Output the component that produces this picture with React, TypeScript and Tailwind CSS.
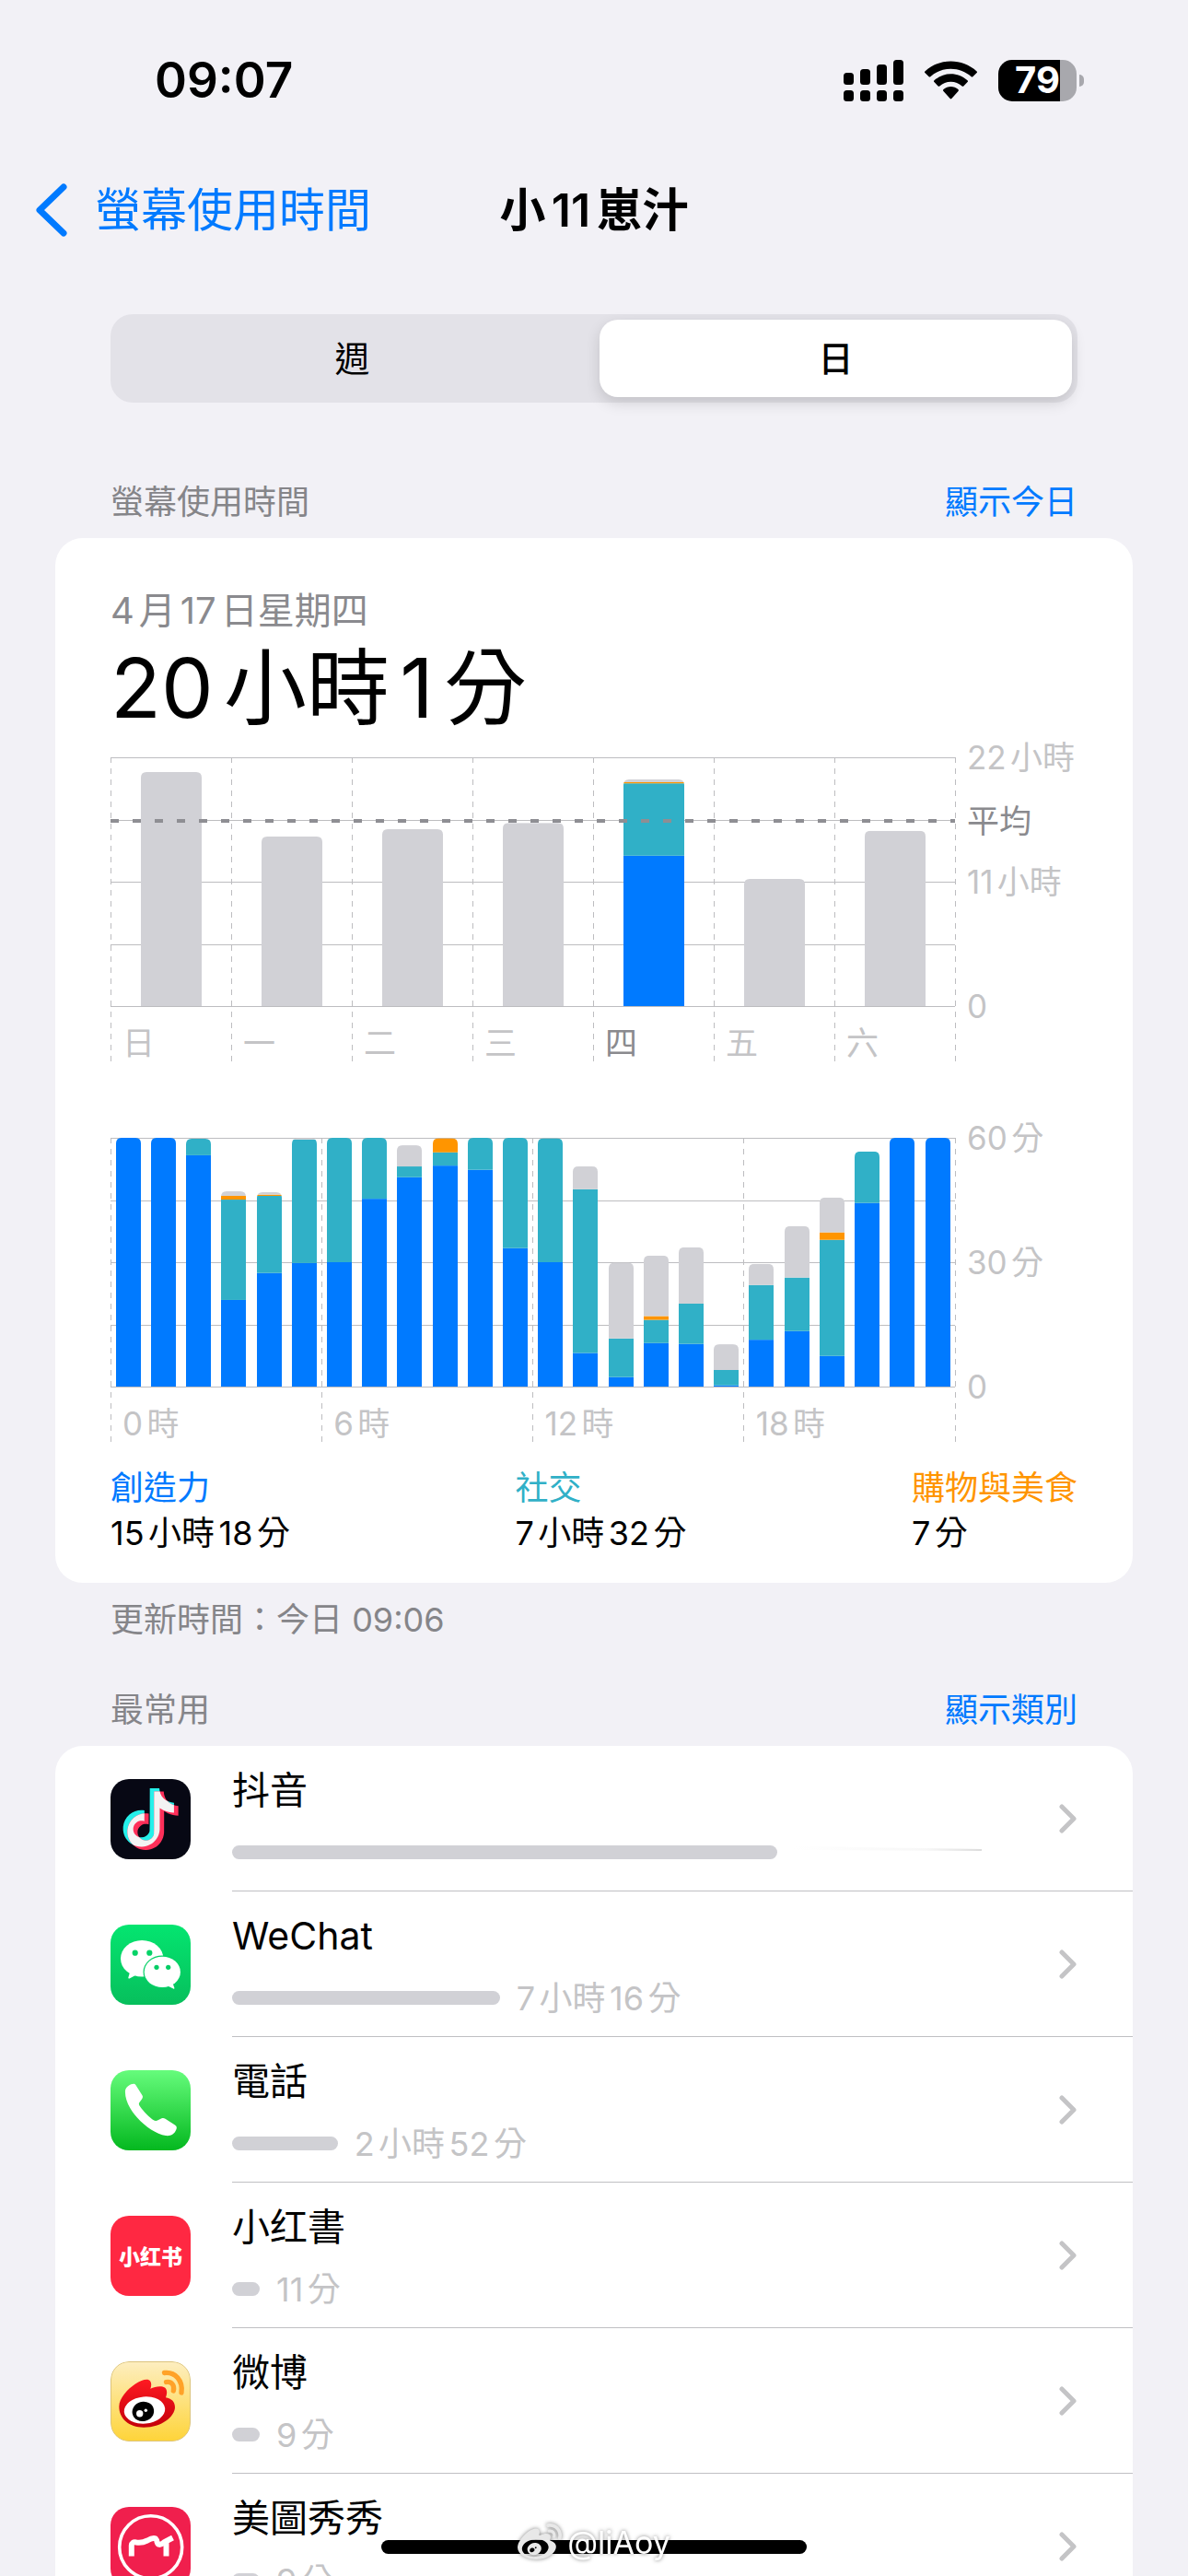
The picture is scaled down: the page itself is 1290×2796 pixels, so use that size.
import { useState } from 'react'
import { FaWeibo } from 'react-icons/fa'

type Segments = { creative?: number; social?: number; shopping?: number; other?: number }

const PLOT_WIDTH = 917
const PLOT_HEIGHT = 270
const PLOT_TOP = 24

const segmentColors: [keyof Segments, string][] = [
  ['creative', '#007aff'],
  ['social', '#30b0c7'],
  ['shopping', '#ff9500'],
  ['other', '#d1d1d6'],
]

// hours per day
const week: Segments[] = [
  { other: 20.7 },
  { other: 15 },
  { other: 15.65 },
  { other: 16.2 },
  { creative: 13.3, social: 6.4, shopping: 0.1, other: 0.25 },
  { other: 11.25 },
  { other: 15.5 },
]

// minutes per hour
const hours: Segments[] = [
  { creative: 60 },
  { creative: 60 },
  { creative: 55.8, social: 4 },
  { creative: 20.9, social: 24.2, shopping: 0.9, other: 1.1 },
  { creative: 27.4, social: 18.6, shopping: 0.3, other: 0.6 },
  { creative: 29.8, social: 29.8, other: 0.3 },
  { creative: 30, social: 30 },
  { creative: 45.3, social: 14.7 },
  { creative: 50.5, social: 2.6, other: 5.1 },
  { creative: 53.3, social: 3.2, shopping: 3.4 },
  { creative: 52.3, social: 7.7 },
  { creative: 33.4, social: 26.6 },
  { creative: 30, social: 29.9 },
  { creative: 8.1, social: 39.5, other: 5.5 },
  { creative: 2.3, social: 9.3, other: 18.3 },
  { creative: 10.5, social: 5.6, shopping: 0.9, other: 14.6 },
  { creative: 10.3, social: 9.7, other: 13.6 },
  { creative: 0.3, social: 3.7, other: 6.2 },
  { creative: 11.3, social: 13.2, other: 5.1 },
  { creative: 13.4, social: 12.9, other: 12.4 },
  { creative: 7.4, social: 28, shopping: 1.8, other: 8.4 },
  { creative: 44.3, social: 12.4 },
  { creative: 60 },
  { creative: 60 },
]

interface ChartProps {
  id: string
  label: string
  data: Segments[]
  max: number
  barRatio: number
  ticks: string[]
  activeTick?: number
  axis: { value: number; text: string }[]
  average?: number
}

function Chart({ id, label, data, max, barRatio, ticks, activeTick, axis, average }: ChartProps) {
  const column = PLOT_WIDTH / data.length
  const barWidth = column * barRatio
  const tickWidth = PLOT_WIDTH / ticks.length
  const bottom = PLOT_TOP + PLOT_HEIGHT
  const toY = (value: number) => bottom - (value / max) * PLOT_HEIGHT

  return (
    <svg viewBox="0 0 1050 354" role="img" aria-label={label} className="block h-auto w-full overflow-visible">
      {[0, 0.25, 0.5, 0.75, 1].map((t) => (
        <rect key={t} x="0" y={Math.round(PLOT_TOP + t * PLOT_HEIGHT)} width={PLOT_WIDTH} height="1" fill="#bdbdc0" />
      ))}
      {Array.from({ length: ticks.length + 1 }, (_, i) => {
        const x = Math.floor(i * tickWidth) + 0.5
        return (
          <line key={i} x1={x} x2={x} y1={PLOT_TOP} y2="354" stroke="#bdbdc0" strokeWidth="1" strokeDasharray="6 6" />
        )
      })}

      {data.map((segments, i) => {
        const x = Math.round(i * column + (column - barWidth) / 2)
        const w = Math.round(barWidth)
        const total = segmentColors.reduce((sum, [key]) => sum + (segments[key] || 0), 0)
        const top = toY(total)
        let stacked = 0
        return (
          <g key={i} clipPath={`url(#${id}-${i})`}>
            <clipPath id={`${id}-${i}`}>
              <path d={`M${x} ${bottom}V${top + 6}q0 -6 6 -6h${w - 12}q6 0 6 6V${bottom}z`} />
            </clipPath>
            {segmentColors.map(([key, color]) => {
              const value = segments[key] || 0
              if (!value) return null
              stacked += value
              return (
                <rect key={key} x={x} y={toY(stacked)} width={w} height={(value / max) * PLOT_HEIGHT} fill={color} />
              )
            })}
          </g>
        )
      })}

      {average !== undefined && (
        <line
          x1="0"
          x2={PLOT_WIDTH}
          y1={Math.round(toY(average))}
          y2={Math.round(toY(average))}
          stroke="#8e8e93"
          strokeWidth="4"
          strokeDasharray="9 15"
        />
      )}

      {ticks.map((text, i) => (
        <text
          key={text}
          x={i * tickWidth + 13}
          y="347"
          className={`text-[35px] ${i === activeTick ? 'fill-[#8a8a8e]' : 'fill-[#c4c4c6]'}`}
        >
          {text}
        </text>
      ))}
      {axis.map(({ value, text }) => (
        <text
          key={text}
          x="930"
          y={toY(value) + 13}
          className={`text-[35px] ${text === '平均' ? 'fill-[#8a8a8e]' : 'fill-[#c4c4c6]'}`}
        >
          {text}
        </text>
      ))}
    </svg>
  )
}

const TIKTOK_NOTE =
  'M12.525.02c1.31-.02 2.61-.01 3.91-.02.08 1.53.63 3.09 1.75 4.17 1.12 1.11 2.7 1.62 4.24 1.79v4.03c-1.44-.05-2.89-.35-4.2-.97-.57-.26-1.1-.59-1.62-.93-.01 2.92.01 5.84-.02 8.75-.08 1.4-.54 2.79-1.35 3.94-1.31 1.92-3.58 3.17-5.91 3.21-1.43.08-2.86-.31-4.08-1.03-2.02-1.19-3.44-3.37-3.65-5.71-.02-.5-.03-1-.01-1.49.18-1.9 1.12-3.72 2.58-4.96 1.66-1.44 3.98-2.13 6.15-1.72.02 1.48-.04 2.96-.04 4.44-.99-.32-2.15-.23-3.02.37-.63.41-1.11 1.04-1.36 1.75-.21.51-.15 1.07-.14 1.61.24 1.64 1.82 3.02 3.5 2.87 1.12-.01 2.19-.66 2.77-1.61.19-.33.4-.67.41-1.06.1-1.79.06-3.57.07-5.36.01-4.03-.01-8.05.02-12.07z'

const iconClass = 'size-[87px] shrink-0 rounded-[20px]'

function DouyinIcon() {
  return (
    <svg viewBox="0 0 87 87" className={iconClass} aria-hidden="true">
      <rect width="87" height="87" fill="#070814" />
      <clipPath id="note">
        <path transform="translate(9.5 10) scale(2.65)" d={TIKTOK_NOTE} />
      </clipPath>
      <path transform="translate(9.5 10) scale(2.65)" d={TIKTOK_NOTE} fill="#25f0ea" />
      <path transform="translate(14.2 13.4) scale(2.65)" d={TIKTOK_NOTE} fill="#fe2f59" />
      <g clipPath="url(#note)">
        <path transform="translate(14.2 13.4) scale(2.65)" d={TIKTOK_NOTE} fill="#f3f3f3" />
      </g>
    </svg>
  )
}

function WeChatIcon() {
  return (
    <svg viewBox="0 0 87 87" className={iconClass} aria-hidden="true">
      <linearGradient id="wechat" x1="0" y1="0" x2="0" y2="1">
        <stop offset="0" stopColor="#04e570" />
        <stop offset="1" stopColor="#07bf5c" />
      </linearGradient>
      <rect width="87" height="87" fill="url(#wechat)" />
      <ellipse cx="34.2" cy="36.8" rx="23.2" ry="19.8" fill="#fff" />
      <path d="M21.5 50 19.3 57.5Q19.2 59 20.6 58.4L29 54z" fill="#fff" />
      <circle cx="26.7" cy="30.7" r="3.1" fill="#05d367" />
      <circle cx="42.3" cy="30.7" r="3.1" fill="#05d367" />
      <ellipse cx="56.3" cy="51.4" rx="20.8" ry="17.9" fill="#05d066" />
      <ellipse cx="56.3" cy="51.4" rx="19.6" ry="16.7" fill="#fff" />
      <path d="M67 62 69.4 68.8Q69.5 70.2 68.2 69.6L61 66z" fill="#fff" />
      <circle cx="50" cy="46.3" r="2.6" fill="#05cd65" />
      <circle cx="62.7" cy="46.3" r="2.6" fill="#05cd65" />
    </svg>
  )
}

function PhoneIcon() {
  return (
    <svg viewBox="0 0 87 87" className={iconClass} aria-hidden="true">
      <linearGradient id="phone" x1="0" y1="0" x2="0" y2="1">
        <stop offset="0" stopColor="#66fc7c" />
        <stop offset="1" stopColor="#04b81f" />
      </linearGradient>
      <rect width="87" height="87" fill="url(#phone)" />
      <path
        fill="#fff"
        d="M16 22C16.5 18 22 14.5 25.5 14.7 26.5 14.9 27 15.5 27.5 16.3L34.3 27C35.5 29 35 30.2 33.800 31.800L31.200 35.200C30.400 36.500 31 38 32 39.200 36 45 42 51 47.300 54.500 48.500 55.200 50 55.100 51 54.500L55.500 52.300C57 51.700 58 51.800 59.500 52.800L70 59.600C72 60.900 72.200 62.500 71.300 64.500 69.500 69.500 65 71.700 60 71 50 69.500 38 61.500 29 51.500 21 42.500 15.200 32 16 22Z"
      />
    </svg>
  )
}

function XiaohongshuIcon() {
  return (
    <span
      aria-hidden="true"
      className="flex size-[87px] shrink-0 items-center justify-center rounded-[20px] bg-[#ff2842] font-['Noto_Sans_CJK_SC',sans-serif] text-[23px] font-black leading-none text-white"
    >
      小红书
    </span>
  )
}

function WeiboIcon() {
  return (
    <svg viewBox="0 0 87 87" className={iconClass} aria-hidden="true">
      <linearGradient id="weibo-bg" x1="0" y1="0" x2="0" y2="1">
        <stop offset="0" stopColor="#fdeec0" />
        <stop offset="1" stopColor="#fed439" />
      </linearGradient>
      <linearGradient id="weibo-red" x1="0" y1="0" x2="0" y2="1">
        <stop offset="0" stopColor="#ff1a22" />
        <stop offset="1" stopColor="#c4000a" />
      </linearGradient>
      <rect x="0.5" y="0.5" width="86" height="86" rx="19.5" fill="url(#weibo-bg)" stroke="#dcc47c" />
      <path
        fill="url(#weibo-red)"
        d="M9.3 49C9.5 40 18 30.5 27 24.5 34 19.8 41 18 43.2 21.5 44.8 24 44.3 27 43.3 29.8 48 27.5 55 26 59 28.5 62 31 61.5 35.5 60 39.3 66 40.5 70 43.5 70 50 69.5 60 56 71.7 36 71.7 20 71.7 9.3 62 9.3 49Z"
      />
      <ellipse cx="37" cy="53" rx="22.3" ry="14.6" fill="#fff" transform="rotate(-5 37 53)" />
      <ellipse cx="35.3" cy="54.5" rx="11.8" ry="10.6" fill="#000" transform="rotate(-12 35 54)" />
      <circle cx="31.7" cy="56.7" r="3.7" fill="#fff" />
      <circle cx="38.3" cy="53.2" r="1.7" fill="#fff" />
      <path
        d="M58.5 12.5C70 11 79 21 77 34M60.5 22.5C66 21.5 70 26 68.3 32"
        fill="none"
        stroke="#ffa228"
        strokeWidth="5.3"
        strokeLinecap="round"
      />
    </svg>
  )
}

function MeituIcon() {
  return (
    <svg viewBox="0 0 87 87" className={iconClass} aria-hidden="true">
      <rect width="87" height="87" fill="#f01f4d" />
      <circle cx="43.7" cy="43.7" r="34" fill="none" stroke="#fff" strokeWidth="3.6" />
      <path
        d="M22.8 53.5V42Q23 37.5 28 38.5 34 39.5 40 36.5 46 33 49 34.5 50.5 36 50.5 38 52 43.5 58 38.5L67.5 33.5M60.5 53.5V39"
        fill="none"
        stroke="#fff"
        strokeWidth="6"
        strokeLinejoin="round"
      />
    </svg>
  )
}

const apps = [
  { name: '抖音', minutes: 888, time: '', Icon: DouyinIcon },
  { name: 'WeChat', minutes: 436, time: '7小時16分', Icon: WeChatIcon },
  { name: '電話', minutes: 172, time: '2小時52分', Icon: PhoneIcon },
  { name: '小红書', minutes: 11, time: '11分', Icon: XiaohongshuIcon },
  { name: '微博', minutes: 9, time: '9分', Icon: WeiboIcon },
  { name: '美圖秀秀', minutes: 9, time: '9分', Icon: MeituIcon },
]

const categories = [
  { name: '創造力', time: '15小時18分', color: 'text-[#007aff]' },
  { name: '社交', time: '7小時32分', color: 'text-[#30b0c7]' },
  { name: '購物與美食', time: '7分', color: 'text-[#ff9500]' },
]

function StatusBar() {
  return (
    <div className="flex h-[174px] items-center justify-between pl-[168px] pr-[113px]">
      <span className="text-[53px] font-semibold leading-none">09:07</span>
      <div className="flex items-center gap-[23px]">
        <svg viewBox="0 0 65 45" className="h-[45px] w-[65px]" aria-hidden="true">
          {[14, 10, 5, 0].map((y, i) => (
            <g key={y}>
              <rect x={i * 18} y={y} width="11" height={27 - y} rx="3.5" />
              <rect x={i * 18} y="33" width="11" height="12" rx="3.5" />
            </g>
          ))}
        </svg>
        <svg viewBox="0 0 17.15 12.33" className="h-[42px] w-[57px]" aria-hidden="true">
          <path d="M8.571 2.466c2.487 0 4.879.922 6.682 2.576.136.128.353.126.486-.004l1.298-1.263a.344.344 0 0 0-.003-.494C12.303-1.094 4.839-1.094.108 3.281a.344.344 0 0 0-.003.494l1.298 1.263c.133.13.35.132.486.004 1.803-1.654 4.195-2.576 6.682-2.576zM8.568 6.687c1.357 0 2.666.511 3.672 1.435.136.131.35.128.483-.006l1.288-1.319a.369.369 0 0 0-.006-.52c-3.063-2.892-7.808-2.892-10.872 0a.369.369 0 0 0-.005.52l1.287 1.319c.133.134.347.137.483.006a5.43 5.43 0 0 1 3.67-1.435zM11.092 9.48a.4.4 0 0 1-.102.281l-2.177 2.455a.32.32 0 0 1-.483 0L6.153 9.761a.4.4 0 0 1 .011-.556c1.39-1.275 3.425-1.275 4.815 0 .07.07.111.17.113.275z" />
        </svg>
        <div className="flex items-center gap-[3px]">
          <div className="flex h-[45px] w-[85px] items-center justify-center rounded-[15px] bg-[linear-gradient(to_right,#000_79%,#a8a8ad_79%)] text-[40px] font-bold leading-none text-white">
            79
          </div>
          <div className="h-[13px] w-[5px] rounded-r-full bg-[#a8a8ad]" />
        </div>
      </div>
    </div>
  )
}

function SectionHeader({ title, action }: { title: string; action: string }) {
  return (
    <div className="mx-[120px] mb-[9px] flex h-[60px] items-center justify-between text-[36px]">
      <h2 className="text-[#858589]">{title}</h2>
      <button type="button" className="text-[#007aff]">
        {action}
      </button>
    </div>
  )
}

export default function App() {
  const [range, setRange] = useState('日')

  return (
    <div className="relative h-screen overflow-hidden bg-[#f2f1f6] font-['Inter','Noto_Sans_CJK_TC',sans-serif] text-black [text-autospace:normal]">
      <StatusBar />

      <header className="grid h-[108px] grid-cols-[1fr_auto_1fr] items-center pl-[38px] text-[50px] leading-[60px]">
        <a href="#back" className="flex items-center gap-[30px] text-[#007aff]">
          <svg viewBox="0 0 35 58" className="h-[58px] w-[35px]" aria-hidden="true">
            <path d="M31 4 5 29 31 54" fill="none" stroke="currentColor" strokeWidth="7" strokeLinecap="round" strokeLinejoin="round" />
          </svg>
          螢幕使用時間
        </a>
        <h1 className="pr-[38px] font-semibold">小11崽汁</h1>
      </header>

      <div className="mx-[120px] mt-[59px] grid h-[96px] grid-cols-2 gap-[12px] rounded-[24px] bg-[#e3e2e8] p-[6px] text-[38px]">
        {['週', '日'].map((item) => (
          <button
            key={item}
            type="button"
            aria-pressed={range === item}
            onClick={() => setRange(item)}
            className={`rounded-[20px] ${
              range === item ? 'bg-white font-medium shadow-[0_6px_16px_rgba(0,0,0,0.14)]' : ''
            }`}
          >
            {item}
          </button>
        ))}
      </div>

      <section className="mt-[78px]">
        <SectionHeader title="螢幕使用時間" action="顯示今日" />
        <div className="mx-[60px] rounded-[30px] bg-white px-[60px] pb-[29px] pt-[49px]">
          <p className="text-[40px] leading-[60px] text-[#8a8a8e]">4月17日星期四</p>
          <p className="pt-[3px] text-[90px] leading-[102px]">20小時1分</p>
          <Chart
            id="week"
            label="每日螢幕使用時間"
            data={week}
            max={22}
            barRatio={0.5}
            ticks={['日', '一', '二', '三', '四', '五', '六']}
            activeTick={4}
            average={16.4}
            axis={[
              { value: 22, text: '22小時' },
              { value: 16.4, text: '平均' },
              { value: 11, text: '11小時' },
              { value: 0, text: '0' },
            ]}
          />
          <div className="mt-[59px]">
            <Chart
              id="hour"
              label="每小時螢幕使用時間"
              data={hours}
              max={60}
              barRatio={0.7}
              ticks={['0時', '6時', '12時', '18時']}
              axis={[
                { value: 60, text: '60分' },
                { value: 30, text: '30分' },
                { value: 0, text: '0' },
              ]}
            />
          </div>
          <dl className="mt-[26px] flex justify-between text-[36px] leading-[49px]">
            {categories.map(({ name, time, color }) => (
              <div key={name}>
                <dt className={color}>{name}</dt>
                <dd>{time}</dd>
              </div>
            ))}
          </dl>
        </div>
        <p className="mx-[120px] mt-[10px] text-[36px] leading-[60px] text-[#858589]">更新時間：今日 09:06</p>
      </section>

      <section className="mt-[38px]">
        <SectionHeader title="最常用" action="顯示類別" />
        <ul className="mx-[60px] rounded-[30px] bg-white">
          {apps.map(({ name, minutes, time, Icon }) => (
            <li key={name}>
              <a href="#app" className="flex items-center gap-[45px] pl-[60px]">
                <Icon />
                <div className="flex h-[158px] flex-1 items-center justify-between border-b border-[#c0c0c3] pr-[60px]">
                  <div>
                    <p className="text-[41px] leading-[60px]">{name}</p>
                    <div className="mt-[14px] flex h-[48px] items-center gap-[18px] text-[36px] text-[#c4c4c6]">
                      <div
                        className="h-[15px] rounded-full bg-[#d1d1d6]"
                        style={{ width: Math.max(30, (minutes * 2) / 3) }}
                      />
                      {time || (
                        <svg viewBox="0 0 204 8" className="mb-2 h-[8px] w-[204px]" aria-hidden="true">
                          <linearGradient id="fade">
                            <stop offset="0" stopColor="#fff" />
                            <stop offset="0.7" stopColor="#f7f7f7" />
                            <stop offset="1" stopColor="#dcdcdc" />
                          </linearGradient>
                          <path d="M0 1 204 4V6L0 5z" fill="url(#fade)" />
                        </svg>
                      )}
                    </div>
                  </div>
                  <svg viewBox="0 0 20 32" className="h-[32px] w-[20px]" aria-hidden="true">
                    <path d="M3 3 16 16 3 29" fill="none" stroke="#c4c4c6" strokeWidth="5" strokeLinecap="round" strokeLinejoin="round" />
                  </svg>
                </div>
              </a>
            </li>
          ))}
        </ul>
      </section>

      <div className="absolute inset-x-0 bottom-[24px] flex justify-center">
        <div className="h-[15px] w-[462px] rounded-full bg-black" />
      </div>
      <div className="absolute inset-x-0 bottom-[12px] flex items-center justify-center gap-[6px] text-[34px] leading-[44px] text-white drop-shadow-[0_0_2px_rgba(0,0,0,0.5)]">
        <FaWeibo className="size-[48px] text-[#e8e8e8]" />
        @liAoy
      </div>
    </div>
  )
}
